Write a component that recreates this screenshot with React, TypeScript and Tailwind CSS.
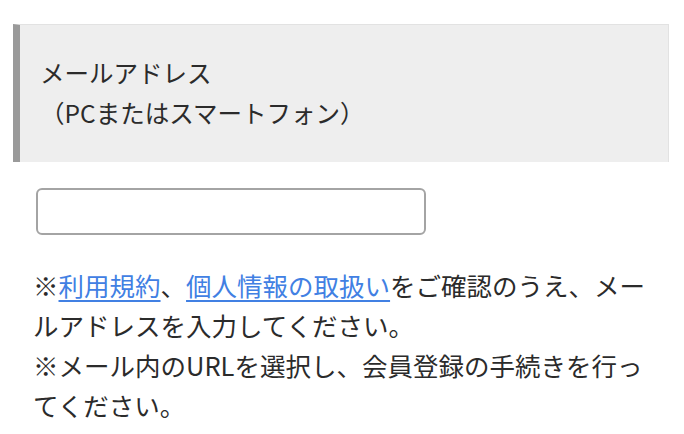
export default function App() {
  return (
    <div
      className="min-h-[434px] w-full bg-white pt-6 text-[#2b2b2b]"
      style={{ fontFamily: '"Noto Sans CJK JP", "Noto Sans", sans-serif' }}
    >
      <div className="ml-[13px] mr-[15px] border-t border-r border-[#e2e2e2] border-l-[7px] border-l-[#9a9a9a] bg-[#eeeeee] pl-[20px] pt-[28px] pb-[29px] text-[24.5px] leading-[40px]">
        <p>メールアドレス</p>
        <p>（PCまたはスマートフォン）</p>
      </div>

      <div className="px-[36px] pt-[26px]">
        <input
          type="email"
          className="block h-[47px] w-[390px] rounded-[6px] border-2 border-[#a4a4a4] bg-white"
        />
      </div>

      <p className="mt-[30px] px-[33px] text-[25.5px] leading-[40px]">
        ※<a href="#" className="text-[#4180e3] underline underline-offset-4">利用規約</a>、
        <a href="#" className="text-[#4180e3] underline underline-offset-4">個人情報の取扱い</a>
        をご確認のうえ、メールアドレスを入力してください。
        <br />
        ※メール内のURLを選択し、会員登録の手続きを行ってください。
      </p>
    </div>
  );
}
